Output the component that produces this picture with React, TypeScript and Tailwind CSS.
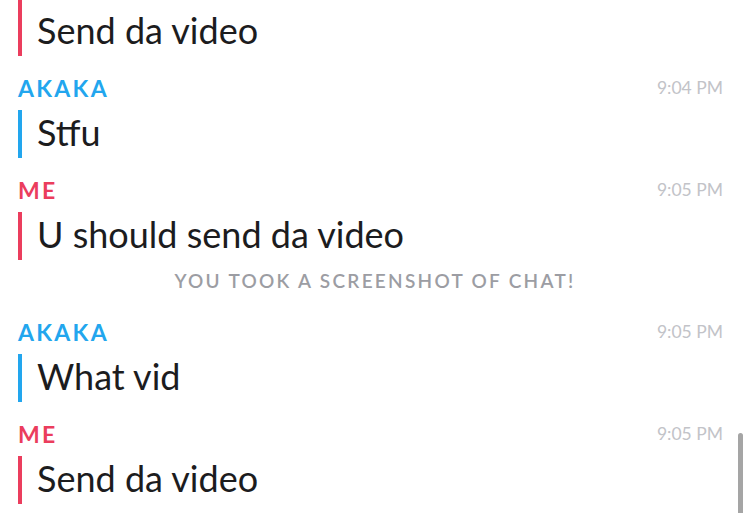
type Sender = 'me' | 'akaka';

type ChatItem =
  | { kind: 'msg'; from: Sender; time: string; text: string; tall?: boolean }
  | { kind: 'notice'; text: string };

const items: ChatItem[] = [
  { kind: 'msg', from: 'me', time: '9:04 PM', text: 'Send da video', tall: true },
  { kind: 'msg', from: 'akaka', time: '9:04 PM', text: 'Stfu' },
  { kind: 'msg', from: 'me', time: '9:05 PM', text: 'U should send da video' },
  { kind: 'notice', text: 'You took a screenshot of chat!' },
  { kind: 'msg', from: 'akaka', time: '9:05 PM', text: 'What vid' },
  { kind: 'msg', from: 'me', time: '9:05 PM', text: 'Send da video' },
];

function Message({ from, time, text, tall }: { from: Sender; time: string; text: string; tall?: boolean }) {
  const isMe = from === 'me';
  return (
    <div className="pt-[18px]">
      <div className="flex h-[28px] items-center justify-between pl-[18px] pr-[27px]">
        <span
          className={`text-[23px] font-bold leading-none tracking-[0.1em] ${
            isMe ? 'text-[#eb3d5d]' : 'text-[#22a6ee]'
          }`}
        >
          {isMe ? 'ME' : 'AKAKA'}
        </span>
        <span className="text-[17.5px] leading-none text-[#c2c3c8]">{time}</span>
      </div>
      <div
        className={`ml-[18px] mt-[8px] flex items-center border-l-4 pl-[15px] text-[36px] leading-none text-[#1c1c1e] ${
          isMe ? 'border-[#eb3d5d]' : 'border-[#22a6ee]'
        } ${tall ? 'h-[60px] pb-[4px] pt-[12px]' : 'h-[48px] pb-[4px]'}`}
      >
        {text}
      </div>
    </div>
  );
}

export default function App() {
  return (
    <div className="relative h-[513px] w-[750px] overflow-hidden bg-white font-['Lato',sans-serif]">
      <div className="-mt-[58px] flex flex-col">
        {items.map((item, i) =>
          item.kind === 'notice' ? (
            <div
              key={i}
              className="h-[40px] pt-[11px] text-center text-[19px] font-semibold uppercase leading-[20px] tracking-[0.12em] text-[#9c9da3]"
            >
              {item.text}
            </div>
          ) : (
            <Message key={i} from={item.from} time={item.time} text={item.text} tall={item.tall} />
          ),
        )}
      </div>
      {/* scroll indicator */}
      <div className="absolute right-[7px] top-[433px] h-[90px] w-[5px] rounded-full bg-[#a5a5a5]" />
    </div>
  );
}
